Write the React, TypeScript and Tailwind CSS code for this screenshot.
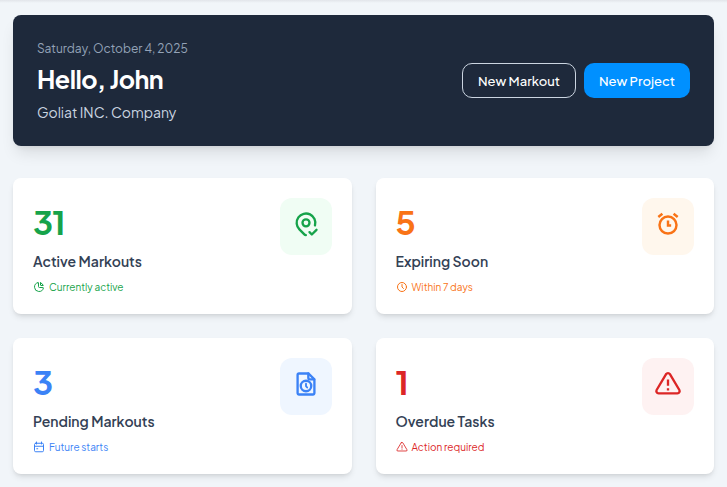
import type { ReactNode } from 'react';

type Card = {
  value: string;
  title: string;
  note: string;
  color: string;
  tile: string;
  icon: ReactNode;
  noteIcon: ReactNode;
};

function Icon({ size, stroke = 2, children }: { size: number; stroke?: number; children: ReactNode }) {
  return (
    <svg
      width={size}
      height={size}
      viewBox="0 0 24 24"
      fill="none"
      stroke="currentColor"
      strokeWidth={stroke}
      strokeLinecap="round"
      strokeLinejoin="round"
      className="block shrink-0"
    >
      {children}
    </svg>
  );
}

const cards: Card[] = [
  {
    value: '31',
    title: 'Active Markouts',
    note: 'Currently active',
    color: 'text-[#16a34a]',
    tile: 'bg-[#f0fdf4]',
    icon: (
      <Icon size={28}>
        <circle cx="12" cy="11" r="3" />
        <path d="M11.87 21.48a1.992 1.992 0 0 1-1.283-.58l-4.244-4.243a8 8 0 1 1 13.355-3.474" />
        <path d="M15 19l2 2l4-4" />
      </Icon>
    ),
    noteIcon: (
      <Icon size={12}>
        <path d="M10 3.2A9 9 0 1 0 20.8 14a1 1 0 0 0-1-1H13a2 2 0 0 1-2-2V4a.9.9 0 0 0-1-.8" />
        <path d="M15 3.5A9 9 0 0 1 20.5 9H16a1 1 0 0 1-1-1V3.5" />
      </Icon>
    ),
  },
  {
    value: '5',
    title: 'Expiring Soon',
    note: 'Within 7 days',
    color: 'text-[#f97316]',
    tile: 'bg-[#fff7ed]',
    icon: (
      <Icon size={28} stroke={2.1}>
        <circle cx="12" cy="12.9" r="7.3" />
        <path d="M12 9v4.2h2.7" strokeLinecap="butt" strokeLinejoin="miter" />
        <path d="M7.2 3.2L3.7 6M16.8 3.2l3.5 2.8" strokeLinecap="butt" />
      </Icon>
    ),
    noteIcon: (
      <Icon size={12}>
        <circle cx="12" cy="12" r="9" />
        <path d="M12 7v5l3 3" />
      </Icon>
    ),
  },
  {
    value: '3',
    title: 'Pending Markouts',
    note: 'Future starts',
    color: 'text-[#3b82f6]',
    tile: 'bg-[#eff6ff]',
    icon: (
      <Icon size={28}>
        <path d="M14 3v4a1 1 0 0 0 1 1h4" />
        <path d="M14.2 3H6A1.2 1.2 0 0 0 4.8 4.2v15.6A1.2 1.2 0 0 0 6 21h12A1.2 1.2 0 0 0 19.2 19.8V8z" />
        <circle cx="12" cy="13.7" r="4.5" />
        <path d="M12 11.8V13.8l1 1.2" strokeWidth="1.6" />
      </Icon>
    ),
    noteIcon: (
      <Icon size={12}>
        <rect x="3" y="4.5" width="18" height="17" rx="2.5" />
        <path d="M7 2v4M17 2v4M3 10.5h18" />
        <path d="M7.5 15.5h2" />
      </Icon>
    ),
  },
  {
    value: '1',
    title: 'Overdue Tasks',
    note: 'Action required',
    color: 'text-[#dc2626]',
    tile: 'bg-[#fef2f2]',
    icon: (
      <Icon size={28}>
        <path d="M12 8.2v5.4M12 15.6v2" strokeLinecap="butt" />
        <path d="M10.363 3.591l-8.106 13.534a1.914 1.914 0 0 0 1.636 2.871h16.214a1.914 1.914 0 0 0 1.636-2.87l-8.106-13.536a1.914 1.914 0 0 0-3.274 0z" />
      </Icon>
    ),
    noteIcon: (
      <Icon size={12} stroke={1.7}>
        <path d="M12 9v5M12 16.5v.01" />
        <path d="M10.363 3.591l-8.106 13.534a1.914 1.914 0 0 0 1.636 2.871h16.214a1.914 1.914 0 0 0 1.636-2.87l-8.106-13.536a1.914 1.914 0 0 0-3.274 0z" />
      </Icon>
    ),
  },
];

function StatCard({ card }: { card: Card }) {
  return (
    <section className="flex h-[136px] items-start justify-between rounded-lg bg-white p-5 shadow-[0_4px_6px_-1px_rgba(0,0,0,0.1),0_2px_4px_-2px_rgba(0,0,0,0.1)]">
      <div className={`whitespace-nowrap ${card.color}`}>
        <p className="mt-1 text-[33px] leading-10 font-bold tracking-[-1px]">{card.value}</p>
        <h2 className="mt-[9px] text-[14px] leading-5 font-semibold text-[#334155]">{card.title}</h2>
        <div className="mt-2 flex items-center gap-1 text-[10px] leading-4">
          {card.noteIcon}
          <span>{card.note}</span>
        </div>
      </div>
      <div className={`flex h-[57px] w-[52px] justify-center rounded-xl pt-3 ${card.tile} ${card.color}`}>{card.icon}</div>
    </section>
  );
}

export default function App() {
  return (
    <main className="h-[487px] overflow-hidden bg-[#f1f5f9] font-['Plus_Jakarta_Sans',Inter,sans-serif]">
      <div className="h-[3px] bg-linear-to-b from-[#e2e5ea] to-[#f1f5f9]" />
      <div className="px-[13px] pt-3">
        <header className="flex h-[131px] items-center justify-between rounded-lg bg-[#1e293b] px-6 shadow-[0_10px_15px_-3px_rgba(0,0,0,0.1),0_4px_6px_-4px_rgba(0,0,0,0.1)]">
          <div className="-mt-px whitespace-nowrap">
            <p className="text-[12px] leading-5 text-[#94a3b8]">Saturday, October 4, 2025</p>
            <h1 className="mt-0.5 text-[25px] leading-9 font-bold tracking-[-0.5px] text-white">Hello, John</h1>
            <p className="mt-[5px] text-[14px] leading-5 text-[#cbd5e1]">Goliat INC. Company</p>
          </div>
          <div className="flex gap-2 text-[13px] font-medium whitespace-nowrap text-white">
            <button className="h-[35px] w-[114px] rounded-[10px] border border-[#cbd5e1] pt-0.5">New Markout</button>
            <button className="h-[35px] w-[106px] rounded-[10px] bg-[#0090ff] pt-0.5">New Project</button>
          </div>
        </header>
        <div className="mt-8 grid grid-cols-2 gap-6">
          {cards.map((card) => (
            <StatCard key={card.title} card={card} />
          ))}
        </div>
      </div>
    </main>
  );
}
